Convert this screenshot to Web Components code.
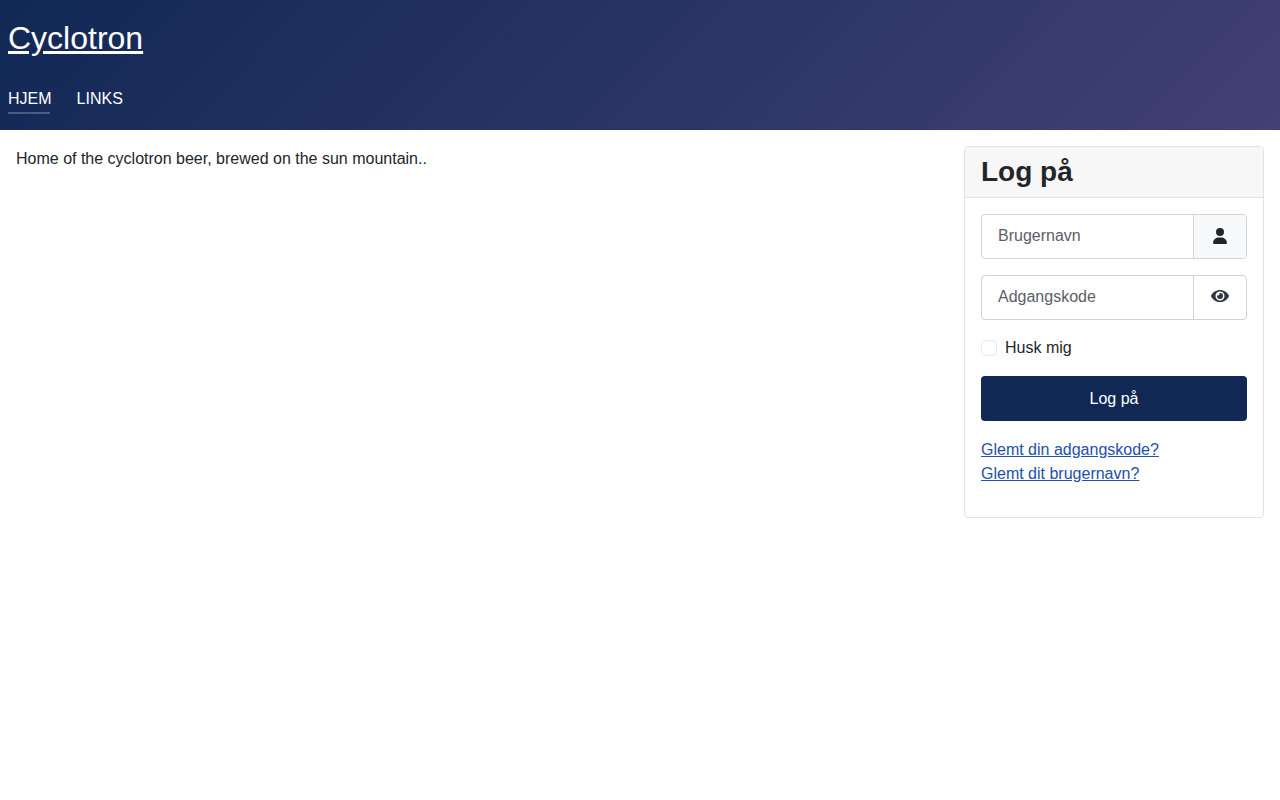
<!DOCTYPE html>
<html lang="da">
<head>
<meta charset="utf-8">
<title>Cyclotron</title>
<style>
    html, body { margin: 0; padding: 0; background: #fff; }
    body { font: 16px/24px "Liberation Sans", Arial, sans-serif; color: #22262a; }
</style>
</head>
<body>
<site-header brand="Cyclotron">
    <nav-item active>HJEM</nav-item>
    <nav-item>LINKS</nav-item>
</site-header>
<page-body>
    Home of the cyclotron beer, brewed on the sun mountain..
    <login-card slot="side" title="Log på">
        <icon-input placeholder="Brugernavn" icon="user" tinted></icon-input>
        <icon-input placeholder="Adgangskode" icon="eye"></icon-input>
        <remember-check>Husk mig</remember-check>
        <login-button>Log på</login-button>
        <div slot="links"><a href="#" style="color:#224faa">Glemt din adgangskode?</a></div>
        <div slot="links"><a href="#" style="color:#224faa">Glemt dit brugernavn?</a></div>
    </login-card>
</page-body>

<script>
const ICONS = {
    user: '<svg width="14" height="16" viewBox="0 0 448 512"><path fill="currentColor" d="M224 256A128 128 0 1 0 224 0a128 128 0 1 0 0 256zm-45.7 48C79.8 304 0 383.8 0 482.3C0 498.7 13.3 512 29.7 512H418.3c16.4 0 29.7-13.3 29.7-29.7C448 383.8 368.2 304 269.7 304H178.3z"/></svg>',
    eye: '<svg width="18" height="16" viewBox="0 0 576 512"><path fill="currentColor" d="M572.52 241.4C518.29 135.59 410.93 64 288 64S57.68 135.64 3.48 241.41a32.35 32.35 0 0 0 0 29.19C57.71 376.41 165.07 448 288 448s230.32-71.64 284.52-177.41a32.35 32.35 0 0 0 0-29.19zM288 400a144 144 0 1 1 144-144 143.93 143.93 0 0 1-144 144zm0-240a95.31 95.31 0 0 0-25.31 3.79 47.85 47.85 0 0 1-66.9 66.9A95.78 95.78 0 1 0 288 160z"/></svg>'
};

class SiteHeader extends HTMLElement {
    constructor() {
        super();
        this.attachShadow({mode: "open"});
        this.shadowRoot.innerHTML = `
            <style>
                :host {
                    display: block;
                    height: 130px;
                    box-sizing: border-box;
                    padding: 14px 8px 0;
                    background: linear-gradient(135deg, #112855 0%, #424077 100%);
                    color: #fff;
                }
                a { display: inline-block; color: #fff; font-size: 32px; line-height: 48px; }
                nav { display: flex; gap: 25px; margin-top: 25px; }
            </style>
            <a href="#"></a>
            <nav><slot></slot></nav>
        `;
    }

    connectedCallback() {
        this.shadowRoot.querySelector('a').textContent = this.getAttribute('brand');
    }
}
customElements.define('site-header', SiteHeader);

class NavItem extends HTMLElement {
    constructor() {
        super();
        this.attachShadow({mode: "open"});
        this.shadowRoot.innerHTML = `
            <style>
                :host { display: block; position: relative; color: #fff; line-height: 24px; }
                :host([active])::after {
                    content: "";
                    position: absolute;
                    left: 0;
                    top: 25px;
                    width: 42px;
                    height: 2px;
                    background: #4f5b7e;
                }
            </style>
            <slot></slot>
        `;
    }
}
customElements.define('nav-item', NavItem);

class PageBody extends HTMLElement {
    constructor() {
        super();
        this.attachShadow({mode: "open"});
        this.shadowRoot.innerHTML = `
            <style>
                :host {
                    display: grid;
                    grid-template-columns: 1fr 300px;
                    gap: 16px;
                    padding: 16px;
                    align-items: start;
                }
                main { padding-top: 1px; }
            </style>
            <main><slot></slot></main>
            <aside><slot name="side"></slot></aside>
        `;
    }
}
customElements.define('page-body', PageBody);

class LoginCard extends HTMLElement {
    constructor() {
        super();
        this.attachShadow({mode: "open"});
        this.shadowRoot.innerHTML = `
            <style>
                :host {
                    display: block;
                    box-sizing: border-box;
                    height: 372px;
                    background: #fff;
                    border: 1px solid #dfe3e7;
                    border-radius: 4px;
                }
                h3 {
                    margin: 0;
                    height: 51px;
                    box-sizing: border-box;
                    padding: 8px 16px 0;
                    font-size: 28px;
                    line-height: 33.6px;
                    font-weight: 700;
                    background: #f7f7f7;
                    border-bottom: 1px solid #dfe3e7;
                    border-radius: 3px 3px 0 0;
                }
                .body { padding: 16px; display: flex; flex-direction: column; gap: 16px; }
                .links { margin-top: 1px; }
            </style>
            <h3></h3>
            <div class="body">
                <slot></slot>
                <div class="links"><slot name="links"></slot></div>
            </div>
        `;
    }

    connectedCallback() {
        this.shadowRoot.querySelector('h3').textContent = this.getAttribute('title');
        this.removeAttribute('title');
    }
}
customElements.define('login-card', LoginCard);

class IconInput extends HTMLElement {
    constructor() {
        super();
        this.attachShadow({mode: "open"});
        this.shadowRoot.innerHTML = `
            <style>
                :host {
                    display: flex;
                    height: 45px;
                    box-sizing: border-box;
                    border: 1px solid #ced4da;
                    border-radius: 4px;
                    background: #fff;
                }
                input {
                    flex: 1;
                    min-width: 0;
                    border: 0;
                    outline: 0;
                    padding: 0 16px 2px;
                    background: transparent;
                    font: inherit;
                    color: #22262a;
                    border-radius: 4px 0 0 4px;
                }
                input::placeholder { color: #5b6066; opacity: 1; }
                .addon {
                    box-sizing: border-box;
                    width: 53px;
                    padding-bottom: 1px;
                    display: flex;
                    align-items: center;
                    justify-content: center;
                    border-left: 1px solid #ced4da;
                    border-radius: 0 3px 3px 0;
                    color: #22262a;
                }
                :host([tinted]) .addon { background: #f8f9fa; }
                :host(:not([tinted])) .addon { color: #2f3640; padding-bottom: 3px; }
            </style>
            <input type="text">
            <div class="addon"></div>
        `;
    }

    connectedCallback() {
        this.shadowRoot.querySelector('input').placeholder = this.getAttribute('placeholder');
        this.shadowRoot.querySelector('.addon').innerHTML = ICONS[this.getAttribute('icon')];
    }
}
customElements.define('icon-input', IconInput);

class RememberCheck extends HTMLElement {
    constructor() {
        super();
        this.attachShadow({mode: "open"});
        this.shadowRoot.innerHTML = `
            <style>
                :host { display: flex; align-items: center; gap: 8px; height: 24px; }
                .box {
                    width: 16px;
                    height: 16px;
                    box-sizing: border-box;
                    border: 1px solid #e6e8eb;
                    border-radius: 4px;
                    background: #fff;
                }
                .label { line-height: 26px; }
            </style>
            <span class="box"></span>
            <span class="label"><slot></slot></span>
        `;
    }
}
customElements.define('remember-check', RememberCheck);

class LoginButton extends HTMLElement {
    constructor() {
        super();
        this.attachShadow({mode: "open"});
        this.shadowRoot.innerHTML = `
            <style>
                :host {
                    display: flex;
                    align-items: center;
                    justify-content: center;
                    height: 45px;
                    background: #112855;
                    color: #fff;
                    border-radius: 4px;
                }
            </style>
            <slot></slot>
        `;
    }
}
customElements.define('login-button', LoginButton);
</script>
</body>
</html>
